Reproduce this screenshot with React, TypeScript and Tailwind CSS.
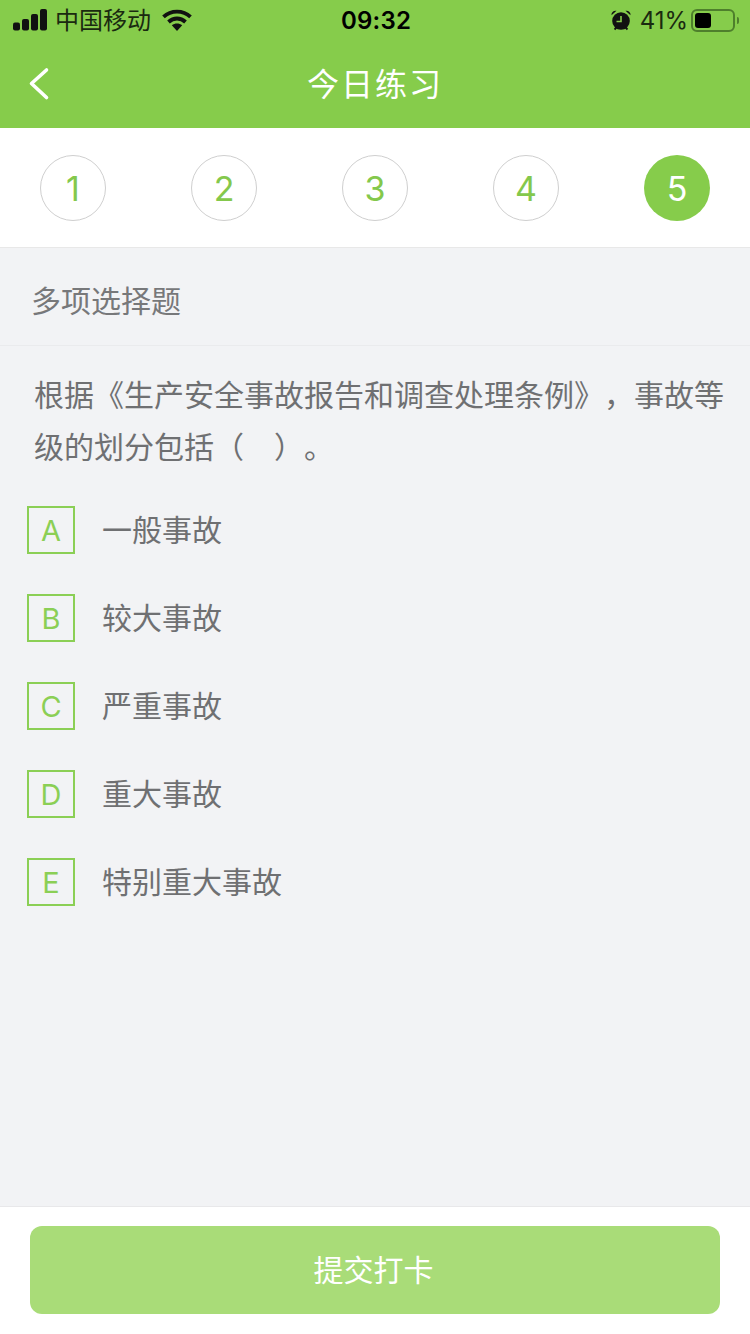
import React from "react";

const cjk = "font-['Liberation_Sans','Noto_Sans_CJK_SC',sans-serif]";

function StatusBar() {
  return (
    <div className="h-[40px] flex items-center justify-between pl-[13px] pr-[13px] relative text-black">
      <div className="flex items-center">
        <svg width="34" height="22" viewBox="0 0 34 22" fill="#111" className="shrink-0">
          <rect x="0" y="13.5" width="7" height="8" rx="2" />
          <rect x="9" y="10" width="7" height="11.5" rx="2" />
          <rect x="18" y="5" width="7" height="16.5" rx="2" />
          <rect x="27" y="0" width="7" height="21.5" rx="2" />
        </svg>
        <span className="ml-[8px] text-[24px] leading-[30px] text-[#1a2a10] translate-y-[1px]">中国移动</span>
        <svg className="ml-[11px]" width="30" height="22" viewBox="0 0 30 22" fill="none" stroke="#111" strokeWidth="3.8">
          <path d="M1.5 7.8C9 .8 21 .8 28.5 7.8" />
          <path d="M6.5 13C11.5 8.3 18.5 8.3 23.5 13" />
          <path d="M15 22L9.8 16.3C13 14 17 14 20.2 16.3Z" fill="#111" stroke="none" />
        </svg>
      </div>
      <span className="absolute left-[341px] top-[6px] text-[24px] leading-[30px] font-semibold tracking-[0.2px] font-['Inter',sans-serif]">09:32</span>
      <div className="flex items-center">
        <svg width="22" height="22" viewBox="0 0 22 22" className="mr-[8px]">
          <circle cx="11" cy="12" r="8.8" fill="#111" />
          <path d="M11 7v5.5H6.5" stroke="#86cc4b" strokeWidth="1.6" fill="none" />
          <path d="M1.5 6.2a4 4 0 0 1 5-4.4zM20.5 6.2a4 4 0 0 0-5-4.4z" fill="#111" />
          <path d="M4.5 20.5l2-2M17.5 20.5l-2-2" stroke="#111" strokeWidth="1.8" />
        </svg>
        <span className="text-[24px] leading-[30px] text-[#1a2a10] mr-[3px] font-['Inter',sans-serif] translate-y-[1px]">41%</span>
        <div className="relative w-[44px] h-[23px] rounded-[6px] border-2 border-[#4e7f2c] p-[2px] mr-[2px]">
          <div className="w-[16px] h-full rounded-[3px] bg-black" />
          <div className="absolute right-[-6px] top-[6px] w-[2px] h-[7px] rounded-r-[2px] bg-[#4e7f2c]" />
        </div>
      </div>
    </div>
  );
}

function Step({ n, active }: { n: number; active?: boolean }) {
  return (
    <div
      className={
        active
          ? "w-[66px] h-[66px] rounded-full bg-[#86cc4b] text-white flex items-center justify-center text-[34px] font-['Inter',sans-serif] font-normal"
          : "w-[66px] h-[66px] rounded-full border border-[#cfcfcf] text-[#84c84c] flex items-center justify-center text-[34px] font-['Inter',sans-serif] font-normal"
      }
    >
      {n}
    </div>
  );
}

function Option({ k, text }: { k: string; text: string }) {
  return (
    <div className="flex items-center h-[48px] mb-[40px]">
      <div className="w-[48px] h-[48px] border-2 border-[#8bcf55] flex items-center justify-center text-[#8bcf55] text-[29px] font-['Inter',sans-serif] font-normal pt-[2px]">
        {k}
      </div>
      <span className="ml-[27px] text-[30px] leading-[48px] text-[#6f7072] translate-y-[1px]">{text}</span>
    </div>
  );
}

export default function App() {
  return (
    <div className={`w-[750px] h-[1334px] flex flex-col bg-[#f2f3f5] overflow-hidden [text-spacing-trim:space-all] ${cjk}`}>
      <div className="bg-[#86cc4b] h-[128px] shrink-0">
        <StatusBar />
        <div className="relative h-[88px] flex items-center justify-center">
          <svg className="absolute left-[28px] top-[27px]" width="22" height="34" viewBox="0 0 22 34" fill="none" stroke="white" strokeWidth="3.6" strokeLinecap="round" strokeLinejoin="round">
            <path d="M18.5 3L3.5 16.5l15 14" />
          </svg>
          <span className="text-[32px] leading-[40px] text-white tracking-[2px] translate-y-[1px]">今日练习</span>
        </div>
      </div>

      <div className="bg-white h-[120px] shrink-0 border-b border-[#e8e8e8] px-[40px] pt-[27px] flex justify-between items-start">
        {[1, 2, 3, 4].map((n) => (
          <Step key={n} n={n} />
        ))}
        <Step n={5} active />
      </div>

      <div className="h-[98px] shrink-0 border-b border-[#eaebed] pl-[31px] pt-[10px] flex items-center text-[30px] text-[#77787a]">
        多项选择题
      </div>

      <div className="flex-1 min-h-0">
        <p className="pl-[34px] pr-[20px] pt-[24px] text-[30px] leading-[52px] text-[#6f7072]">
          根据《生产安全事故报告和调查处理条例》，事故等级的划分包括（　）。
        </p>
        <div className="pl-[27px] pt-[32px]">
          <Option k="A" text="一般事故" />
          <Option k="B" text="较大事故" />
          <Option k="C" text="严重事故" />
          <Option k="D" text="重大事故" />
          <Option k="E" text="特别重大事故" />
        </div>
      </div>

      <div className="bg-white h-[128px] shrink-0 border-t border-[#e8e8ea] px-[30px] pt-[19px]">
        <div className="h-[88px] rounded-[12px] bg-[#a9dc78] flex items-center justify-center text-white text-[30px] pr-[3px]">
          提交打卡
        </div>
      </div>
    </div>
  );
}
